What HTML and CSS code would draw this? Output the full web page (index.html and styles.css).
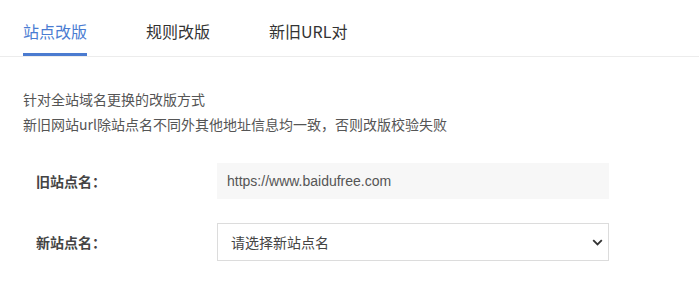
FILE: index.html
```html
<!DOCTYPE html>
<html lang="zh-CN">
<head>
<meta charset="utf-8">
<title>站点改版</title>
<link rel="stylesheet" href="styles.css">
</head>
<body>
<div class="page">
  <nav class="tabs">
    <a class="tab active">站点改版</a>
    <a class="tab">规则改版</a>
    <a class="tab">新旧URL对</a>
  </nav>
  <div class="desc">
    <p>针对全站域名更换的改版方式</p>
    <p>新旧网站url除站点名不同外其他地址信息均一致，否则改版校验失败</p>
  </div>
  <form class="form">
    <div class="row">
      <label class="label">旧站点名：</label>
      <div class="field readonly">https://www.baidufree.com</div>
    </div>
    <div class="row row-select">
      <label class="label">新站点名：</label>
      <div class="select-wrap">
        <select class="select">
          <option>请选择新站点名</option>
        </select>
        <svg class="chevron" width="11" height="7" viewBox="0 0 11 7"><path d="M1.2 1.2 L5.5 5.5 L9.8 1.2" fill="none" stroke="#333" stroke-width="1.8"/></svg>
      </div>
    </div>
  </form>
</div>
</body>
</html>
```
FILE: styles.css
```css
* { box-sizing: border-box; }
body {
  margin: 0;
  background: #fff;
  font-family: "Noto Sans CJK SC", "Noto Sans", sans-serif;
  color: #333;
}
.tabs {
  display: flex;
  gap: 59px;
  padding-left: 23px;
  border-bottom: 1px solid #ececec;
  height: 57px;
}
.tab {
  display: block;
  font-size: 16px;
  line-height: 22px;
  padding-top: 20px;
  height: 56px;
  color: #333;
  border-bottom: 3px solid transparent;
}
.tab.active {
  color: #4a7cd2;
  border-bottom-color: #4b7bd0;
}
.desc {
  padding: 30px 0 0 23px;
  font-size: 14px;
  line-height: 25px;
  color: #555;
}
.desc p { margin: 0; }
.form {
  padding-top: 26px;
}
.row {
  display: flex;
  align-items: center;
  height: 36px;
}
.row-select {
  margin-top: 24px;
  height: 38px;
}
.label {
  width: 217px;
  padding-left: 36px;
  font-size: 14px;
  font-weight: bold;
  color: #444;
}
.field {
  width: 392px;
  height: 36px;
  line-height: 36px;
  padding-left: 10px;
  background: #f7f7f7;
  font-family: "Liberation Sans", Arial, sans-serif;
  font-size: 14px;
  color: #555;
}
.select-wrap {
  position: relative;
  width: 392px;
  height: 38px;
}
.select {
  appearance: none;
  -webkit-appearance: none;
  width: 100%;
  height: 38px;
  border: 1px solid #dcdcdc;
  border-radius: 0;
  background: #fff;
  padding: 0 0 0 13px;
  font-family: "Noto Sans CJK SC", sans-serif;
  font-size: 14px;
  color: #444;
  outline: none;
}
.chevron {
  position: absolute;
  right: 6px;
  top: 16px;
  pointer-events: none;
}
```
